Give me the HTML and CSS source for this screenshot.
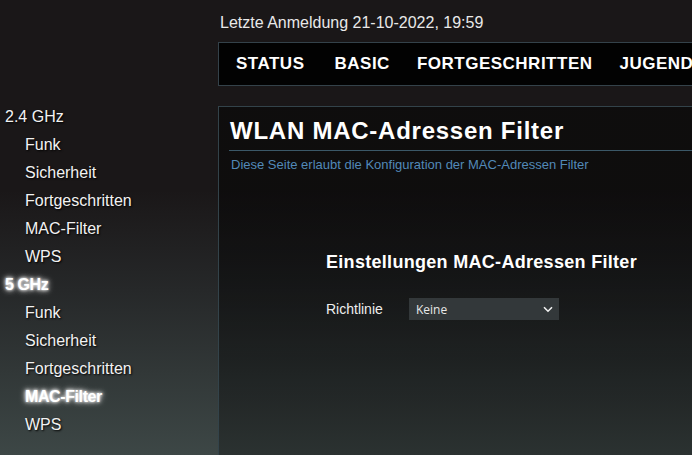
FILE: index.html
```html
<!DOCTYPE html>
<html lang="de">
<head>
<meta charset="utf-8">
<title>WLAN MAC-Adressen Filter</title>
<link rel="stylesheet" href="styles.css">
</head>
<body>
<div class="page">
  <aside class="sidebar">
    <ul class="menu">
      <li class="group">2.4 GHz</li>
      <li class="item">Funk</li>
      <li class="item">Sicherheit</li>
      <li class="item">Fortgeschritten</li>
      <li class="item">MAC-Filter</li>
      <li class="item">WPS</li>
      <li class="group active">5 GHz</li>
      <li class="item">Funk</li>
      <li class="item">Sicherheit</li>
      <li class="item">Fortgeschritten</li>
      <li class="item active">MAC-Filter</li>
      <li class="item">WPS</li>
    </ul>
  </aside>
  <main class="main">
    <div class="last-login">Letzte Anmeldung 21-10-2022, 19:59</div>
    <nav class="topnav">
      <span class="nav-item">STATUS</span>
      <span class="nav-item">BASIC</span>
      <span class="nav-item">FORTGESCHRITTEN</span>
      <span class="nav-item">JUGEND</span>
    </nav>
    <section class="panel">
      <div class="panel-head">
        <h1 class="panel-title">WLAN MAC-Adressen Filter</h1>
      </div>
      <p class="panel-desc">Diese Seite erlaubt die Konfiguration der MAC-Adressen Filter</p>
      <div class="settings">
        <h2 class="settings-title">Einstellungen MAC-Adressen Filter</h2>
        <div class="row">
          <label class="row-label" for="policy">Richtlinie</label>
          <span class="select-wrap">
            <select id="policy" class="select">
              <option>Keine</option>
              <option>Zulassen</option>
              <option>Ablehnen</option>
            </select>
            <svg class="chevron" width="10" height="7" viewBox="0 0 10 7"><path d="M1 1.3 L5 5.2 L9 1.3" fill="none" stroke="#f2f2f2" stroke-width="1.6"/></svg>
          </span>
        </div>
      </div>
    </section>
  </main>
</div>
</body>
</html>
```

FILE: styles.css
```css
html, body {
  margin: 0;
  padding: 0;
  height: 100%;
}

body {
  overflow: hidden;
  font-family: "Liberation Sans", Arial, sans-serif;
  color: #eeeeee;
  background: linear-gradient(180deg, #1a1718 0px, #1a1718 190px, #262829 290px, #3d4746 455px);
  background-color: #1a1718;
}

.page {
  display: grid;
  grid-template-columns: 218px 720px;
  min-height: 455px;
}

/* Sidebar */
.sidebar {
  padding-top: 103px;
}

.menu {
  list-style: none;
  margin: 0;
  padding: 0;
}

.menu li {
  font-size: 16px;
  line-height: 28px;
  height: 28px;
  color: #f2f2f2;
  text-shadow: 1px 1px 2px #000;
  white-space: nowrap;
}

.menu .group {
  padding-left: 5px;
}

.menu .item {
  padding-left: 25px;
}

.menu .active {
  font-weight: bold;
  color: #ffffff;
  text-shadow: 0 0 3px #fff, 0 0 5px #ddd, 0 0 7px #bbb;
  letter-spacing: -0.4px;
}

/* Main column */
.main {
  padding-top: 14px;
}

.last-login {
  font-size: 16px;
  line-height: 18px;
  padding-left: 2px;
  color: #e9e9e9;
}

.topnav {
  margin-top: 10px;
  height: 42px;
  border: 1px solid #34424a;
  background: #020202;
  display: flex;
  align-items: center;
  gap: 27px;
  padding-left: 17px;
  white-space: nowrap;
  overflow: hidden;
}

.nav-item {
  font-size: 17px;
  font-weight: bold;
  letter-spacing: 0.5px;
  line-height: 42px;
  color: #ffffff;
}

.nav-item:first-child {
  margin-right: 3px;
}

/* Panel */
.panel {
  margin-top: 20px;
  border: 1px solid #33434a;
  border-right: none;
  min-height: 400px;
  background: linear-gradient(180deg, rgba(0,0,0,0.45) 0px, rgba(0,0,0,0.45) 150px, rgba(0,0,0,0.3) 348px);
}

.panel-head {
  margin-left: 10px;
  padding-top: 10px;
  padding-bottom: 5px;
  border-bottom: 1px solid #3b5868;
}

.panel-title {
  margin: 0;
  padding-left: 1px;
  font-size: 24px;
  line-height: 28px;
  font-weight: bold;
  letter-spacing: 0.75px;
  color: #ffffff;
}

.panel-desc {
  margin: 6px 0 0 12px;
  font-size: 13px;
  line-height: 15px;
  color: #5289b8;
}

.settings {
  margin-left: 107px;
  padding-top: 80px;
}

.settings-title {
  margin: 0;
  font-size: 18px;
  line-height: 21px;
  font-weight: bold;
  letter-spacing: 0.3px;
  color: #ffffff;
}

.row {
  display: flex;
  align-items: center;
  margin-top: 25px;
}

.row-label {
  width: 83px;
  font-size: 14px;
  color: #eeeeee;
}

.select-wrap {
  position: relative;
  display: inline-block;
  width: 150px;
  height: 22px;
}

.select {
  appearance: none;
  -webkit-appearance: none;
  width: 150px;
  height: 22px;
  margin: 0;
  border: none;
  border-radius: 0;
  padding: 0 0 0 7px;
  background: #33383a;
  color: #e8e8e8;
  font-family: "Open Sans", "Liberation Sans", sans-serif;
  font-size: 12px;
  outline: none;
}

.chevron {
  position: absolute;
  right: 6px;
  top: 8px;
  pointer-events: none;
}
```
